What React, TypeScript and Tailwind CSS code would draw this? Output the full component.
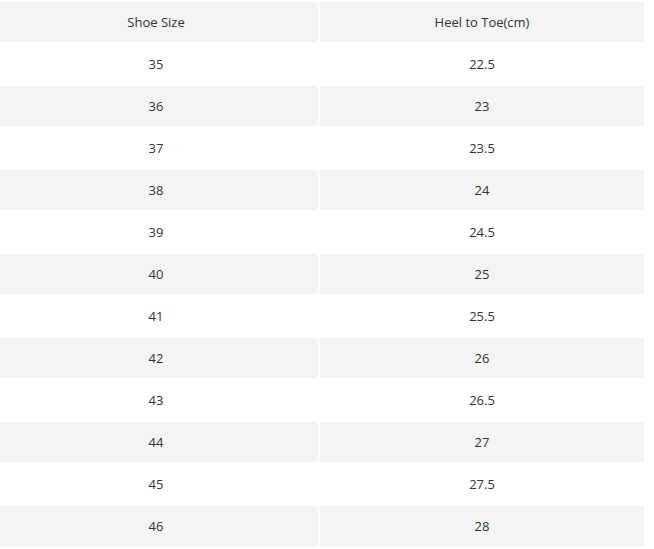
const rows: [string, string][] = [
  ['35', '22.5'],
  ['36', '23'],
  ['37', '23.5'],
  ['38', '24'],
  ['39', '24.5'],
  ['40', '25'],
  ['41', '25.5'],
  ['42', '26'],
  ['43', '26.5'],
  ['44', '27'],
  ['45', '27.5'],
  ['46', '28'],
];

export default function App() {
  return (
    <div className="w-[654px] h-[549px] bg-white pt-[2px] flex flex-col gap-[2px] text-[13px] text-[#333] font-['Open_Sans',sans-serif]">
      <div className="flex gap-[2px] h-[40px] bg-white">
        <div className="w-[318px] pr-[6px] pt-[2px] bg-[#f4f4f4] flex items-center justify-center">Shoe Size</div>
        <div className="w-[324px] pt-[2px] bg-[#f4f4f4] flex items-center justify-center">Heel to Toe(cm)</div>
      </div>
      {rows.map(([size, len], i) => {
        const bg = i % 2 === 1 ? 'bg-[#f4f4f4]' : 'bg-white';
        return (
          <div key={size} className="flex gap-[2px] h-[40px]">
            <div className={`w-[318px] pr-[6px] pt-[2px] ${bg} flex items-center justify-center`}>{size}</div>
            <div className={`w-[324px] pt-[2px] ${bg} flex items-center justify-center`}>{len}</div>
          </div>
        );
      })}
    </div>
  );
}
